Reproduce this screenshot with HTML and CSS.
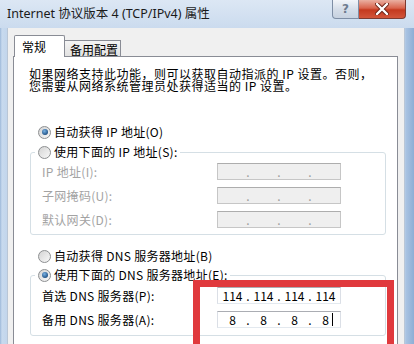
FILE: index.html
```html
<!DOCTYPE html>
<html lang="zh-CN">
<head>
    <meta charset="UTF-8">
    <title>Internet 协议版本 4 (TCP/IPv4) 属性</title>
    <link rel="stylesheet" href="styles.css">
</head>
<body>
    <div class="window">
        <div class="titlebar">
            <span class="title">Internet 协议版本 4 (TCP/IPv4) 属性</span>
            <div class="controls">
                <span class="btn-help">?</span>
                <span class="btn-close">
                    <svg width="14" height="12" viewBox="0 0 14 12">
                        <path d="M2 1 L12 11 M12 1 L2 11" stroke="#6b2418" stroke-width="4.2" stroke-linecap="round"/>
                        <path d="M2 1 L12 11 M12 1 L2 11" stroke="#ffffff" stroke-width="2.4" stroke-linecap="round"/>
                    </svg>
                </span>
            </div>
        </div>

        <div class="client">
            <div class="tabs">
                <div class="tab active">常规</div>
                <div class="tab">备用配置</div>
            </div>

            <div class="page">
                <p class="desc"><span>如果网络支持此功能，则可以获取自动指派的 IP 设置。否则，</span><span>您需要从网络系统管理员处获得适当的 IP 设置。</span></p>

                <div class="radio-row first"><span class="radio checked"></span>自动获得 IP 地址(O)</div>

                <fieldset class="group ip-group">
                    <legend><span class="radio-row"><span class="radio"></span>使用下面的 IP 地址(S):</span></legend>
                    <div class="field disabled">
                        <span class="label">IP 地址(I):</span>
                        <span class="ipbox"><span class="oct"></span><span class="dot">.</span><span class="oct"></span><span class="dot">.</span><span class="oct"></span><span class="dot">.</span><span class="oct"></span></span>
                    </div>
                    <div class="field disabled">
                        <span class="label">子网掩码(U):</span>
                        <span class="ipbox"><span class="oct"></span><span class="dot">.</span><span class="oct"></span><span class="dot">.</span><span class="oct"></span><span class="dot">.</span><span class="oct"></span></span>
                    </div>
                    <div class="field disabled">
                        <span class="label">默认网关(D):</span>
                        <span class="ipbox"><span class="oct"></span><span class="dot">.</span><span class="oct"></span><span class="dot">.</span><span class="oct"></span><span class="dot">.</span><span class="oct"></span></span>
                    </div>
                </fieldset>

                <div class="radio-row dns-auto"><span class="radio"></span>自动获得 DNS 服务器地址(B)</div>

                <fieldset class="group dns-group">
                    <legend><span class="radio-row"><span class="radio checked"></span>使用下面的 DNS 服务器地址(E):</span></legend>
                    <div class="field">
                        <span class="label">首选 DNS 服务器(P):</span>
                        <span class="ipbox"><span class="oct">114</span><span class="dot">.</span><span class="oct">114</span><span class="dot">.</span><span class="oct">114</span><span class="dot">.</span><span class="oct">114</span></span>
                    </div>
                    <div class="field">
                        <span class="label">备用 DNS 服务器(A):</span>
                        <span class="ipbox"><span class="oct">8</span><span class="dot">.</span><span class="oct">8</span><span class="dot">.</span><span class="oct">8</span><span class="dot">.</span><span class="oct">8<i class="caret"></i></span></span>
                    </div>
                </fieldset>
            </div>
        </div>

        <div class="highlight"></div>
    </div>
</body>
</html>
```

FILE: styles.css
```css
body {
    margin: 0;
    width: 414px;
    height: 344px;
    overflow: hidden;
    font-family: "Noto Sans CJK SC", sans-serif;
    font-size: 12px;
    color: #000;
}
.window {
    position: relative;
    height: 344px;
    background: linear-gradient(to right, #9db8d9 0, #c8daee 2px, #c3d6ec 6px, #c3d6ec 404px, #a9c3e2 406px, #8eaed5 414px);
}
.titlebar {
    display: flex;
    height: 28px;
    padding-left: 7px;
    background: linear-gradient(#dce7f4, #cbdbee);
}
.title {
    font-family: "Noto Sans", "Noto Sans CJK SC", sans-serif;
    font-size: 12.5px;
    line-height: 28px;
    color: #1a1a1a;
}
.controls {
    display: flex;
    margin-left: auto;
    margin-right: 8px;
    height: 19px;
}
.btn-help {
    width: 27px;
    box-sizing: border-box;
    border: 1px solid #7e8ea5;
    border-top: 0;
    border-radius: 0 0 0 4px;
    background: linear-gradient(#f2f5f9, #d6dee9 50%, #c7d2e0);
    text-align: center;
    font-family: "DejaVu Sans", sans-serif;
    font-weight: bold;
    font-size: 12px;
    line-height: 18px;
    color: #6f7c8f;
}
.btn-close {
    display: flex;
    align-items: center;
    justify-content: center;
    width: 47px;
    box-sizing: border-box;
    border: 1px solid #7d3a30;
    border-top: 0;
    border-left: 0;
    border-radius: 0 0 4px 0;
    background: linear-gradient(#eab0a2, #d9644d 45%, #c4391f 55%, #d2553a);
}
.client {
    height: 316px;
    margin: 0 9px 0 7px;
    padding: 7px 7px 0 6px;
    box-sizing: border-box;
    background: #f0f0f0;
    box-shadow: inset 1px 0 0 #b9c6d6, inset -1px 0 0 #b9c6d6;
}
.tabs {
    display: flex;
    align-items: flex-end;
    height: 21px;
    padding-left: 1px;
}
.tab {
    box-sizing: border-box;
    border: 1px solid #898c95;
    border-bottom: 0;
    white-space: nowrap;
}
.tab.active {
    position: relative;
    z-index: 1;
    width: 51px;
    height: 22px;
    margin-bottom: -1px;
    padding-left: 7px;
    line-height: 21px;
    background: #fff;
    border-radius: 2px 2px 0 0;
}
.tab:not(.active) {
    width: 56px;
    height: 16px;
    padding: 1px 0 0 5px;
    line-height: 15px;
    border-left: 0;
    background: linear-gradient(#f4f4f4, #e2e2e2);
}
.page {
    height: 300px;
    box-sizing: border-box;
    padding: 11px 0 0 15px;
    border: 1px solid #898c95;
    background: #fff;
    letter-spacing: 0.3px;
}
.desc {
    display: flex;
    flex-direction: column;
    margin: 0;
    letter-spacing: 0.5px;
    white-space: nowrap;
}
.desc span {
    height: 12px;
    line-height: 12px;
}
.radio-row {
    display: flex;
    align-items: center;
    height: 16px;
    line-height: 16px;
    white-space: nowrap;
}
.radio-row.first {
    margin-top: 32px;
    padding-left: 9px;
}
.radio-row.dns-auto {
    margin-top: 13px;
    padding-left: 9px;
}
.radio {
    position: relative;
    width: 13px;
    height: 13px;
    margin-right: 3px;
    box-sizing: border-box;
    border: 1px solid #8d8f91;
    border-radius: 50%;
    background: linear-gradient(135deg, #d4d4d4, #f8f8f8);
    flex: none;
}
.radio.checked::after {
    content: '';
    position: absolute;
    left: 2.5px;
    top: 2.5px;
    width: 6px;
    height: 6px;
    border-radius: 50%;
    background: radial-gradient(circle at 40% 35%, #79b2e4, #1d4f83 75%);
}
.group {
    width: 356px;
    margin: 0 0 0 1px;
    padding: 0 0 6px 11px;
    box-sizing: border-box;
    border: 1px solid #d5dfe5;
    border-radius: 3px;
}
.ip-group {
    margin-top: 4px;
}
.dns-group {
    margin-top: 3px;
    padding-bottom: 7px;
}
.group legend {
    margin-left: -7px;
    padding: 0 2px 0 3px;
}
.field {
    display: flex;
    align-items: center;
    height: 17px;
    margin-top: 7px;
}
.ip-group .field:first-of-type {
    margin-top: 3px;
}
.dns-group .field:first-of-type {
    margin-top: 4px;
}
.label {
    width: 175px;
    white-space: nowrap;
    line-height: 17px;
}
.field.disabled .label {
    color: #a3a3a3;
}
.ipbox {
    display: flex;
    width: 124px;
    height: 17px;
    padding-left: 2px;
    box-sizing: border-box;
    border: 1px solid #dbdfe6;
    border-top-color: #abadb3;
    border-bottom-color: #e3e9ef;
    background: #fff;
    line-height: 15px;
    letter-spacing: 0;
}
.field.disabled .ipbox {
    border-color: #c6c6c6;
    border-top-color: #adadad;
    background: #efefef;
    color: #9c9c9c;
}
.oct {
    position: relative;
    width: 25px;
    text-align: center;
}
.dot {
    width: 6px;
    text-align: center;
}
.caret {
    position: absolute;
    right: 5px;
    top: 1px;
    width: 1px;
    height: 13px;
    background: #000;
}
.highlight {
    position: absolute;
    left: 193px;
    top: 280px;
    width: 201px;
    height: 80px;
    box-sizing: border-box;
    border: 7px solid #e0393d;
}
```
